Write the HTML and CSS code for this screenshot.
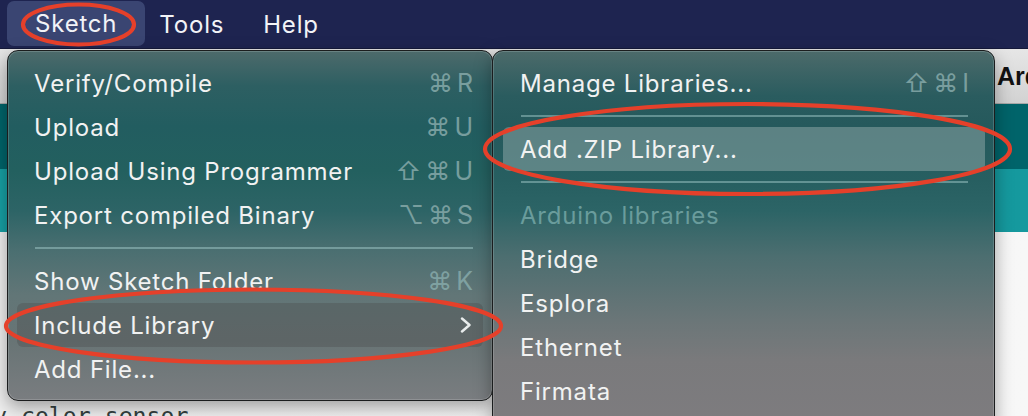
FILE: index.html
```html
<!DOCTYPE html>
<html>
<head>
<meta charset="utf-8">
<link rel="stylesheet" href="styles.css">
</head>
<body>
<div class="screen">
  <div class="menubar">
    <span class="mb-item active">Sketch</span>
    <span class="mb-item tools">Tools</span>
    <span class="mb-item help">Help</span>
  </div>
  <div class="app">
    <div class="toolbar"><span class="title">Arduino</span></div>
    <div class="tabs-dark"></div>
    <div class="tabs-teal"></div>
    <div class="editor"><span class="code">y color sensor</span></div>
  </div>

  <div class="menu menu-left">
    <div class="item"><span class="label">Verify/Compile</span><span class="key">⌘R</span></div>
    <div class="item"><span class="label">Upload</span><span class="key">⌘U</span></div>
    <div class="item"><span class="label">Upload Using Programmer</span><span class="key">⇧⌘U</span></div>
    <div class="item"><span class="label">Export compiled Binary</span><span class="key">⌥⌘S</span></div>
    <div class="sep"></div>
    <div class="item"><span class="label">Show Sketch Folder</span><span class="key">⌘K</span></div>
    <div class="item hl-dark"><span class="label">Include Library</span>
      <svg class="chev" width="12" height="16" viewBox="0 0 12 16"><polyline points="2,1.5 9.5,8 2,14.5" fill="none" stroke="#e8ecec" stroke-width="2.4" stroke-linecap="round" stroke-linejoin="round"/></svg>
    </div>
    <div class="item"><span class="label">Add File...</span></div>
  </div>

  <div class="menu menu-right">
    <div class="item"><span class="label">Manage Libraries...</span><span class="key">⇧⌘I</span></div>
    <div class="sep"></div>
    <div class="item hl-light"><span class="label">Add .ZIP Library...</span></div>
    <div class="sep"></div>
    <div class="item disabled"><span class="label">Arduino libraries</span></div>
    <div class="item"><span class="label">Bridge</span></div>
    <div class="item"><span class="label">Esplora</span></div>
    <div class="item"><span class="label">Ethernet</span></div>
    <div class="item"><span class="label">Firmata</span></div>
  </div>

  <svg class="marks" width="1028" height="416" viewBox="0 0 1028 416">
    <ellipse cx="78.5" cy="24.5" rx="55.5" ry="20" fill="none" stroke="#e5402a" stroke-width="4.2"/>
    <ellipse cx="747.5" cy="149" rx="262.5" ry="45" fill="none" stroke="#e5402a" stroke-width="4.2"/>
    <ellipse cx="253.5" cy="326" rx="247.5" ry="36.5" fill="none" stroke="#e5402a" stroke-width="4.2"/>
  </svg>
</div>
</body>
</html>
```

FILE: styles.css
```css
html, body {
  margin: 0;
  padding: 0;
  width: 1028px;
  height: 416px;
  overflow: hidden;
  background: #f3f3f3;
}

.screen {
  position: relative;
  width: 1028px;
  height: 416px;
  overflow: hidden;
  font-family: Inter, "Noto Sans", "Liberation Sans", sans-serif;
}

.menubar {
  height: 48px;
  background: #1e2450;
  border-bottom: 1px solid #15193a;
  display: flex;
  align-items: center;
  color: #f2f3f7;
  font-size: 24px;
  letter-spacing: 0.8px;
}

.mb-item.active {
  margin-left: 7px;
  height: 45px;
  padding: 0 28px;
  display: flex;
  align-items: center;
  background: #3a4572;
  border-radius: 7px;
  align-self: flex-start;
  margin-top: 1px;
}

.mb-item.tools { margin-left: 14px; }
.mb-item.help { margin-left: 39px; }

.app {
  display: flex;
  flex-direction: column;
  height: 367px;
}

.toolbar {
  height: 55px;
  background: linear-gradient(#e6e6e6, #d2d2d2);
  border-bottom: 1px solid #a8a8a8;
  display: flex;
  align-items: center;
  padding-left: 997px;
  box-sizing: border-box;
}

.title {
  font-family: "Liberation Sans", Arial, sans-serif;
  font-weight: bold;
  font-size: 25px;
  color: #111;
  white-space: nowrap;
}

.tabs-dark {
  height: 65px;
  background: #00646a;
}

.tabs-teal {
  height: 63px;
  background: linear-gradient(90deg, #17a0a4, #15999e);
}

.editor {
  flex: 1;
  background: linear-gradient(90deg, #efefef, #f7f7f7);
  display: flex;
  align-items: flex-end;
}

.code {
  font-family: "DejaVu Sans Mono", "Liberation Mono", monospace;
  font-size: 23.2px;
  color: #34403f;
  margin-left: -7px;
  margin-bottom: -13px;
  white-space: pre;
}

.menu {
  position: absolute;
  top: 50px;
  box-sizing: border-box;
  border: 1px solid #1b1d1e;
  border-radius: 11px;
  box-shadow: inset 0 0 0 1px rgba(255,255,255,0.16), 0 6px 18px rgba(0,0,0,0.35);
  color: #f1f2f2;
  font-size: 24px;
  letter-spacing: 0.8px;
  padding-top: 10px;
}

.menu-left {
  left: 7px;
  width: 486px;
  height: 351px;
  background: linear-gradient(#4d6a6b 0px, #2d5f62 35px, #225d60 75px, #23605f 120px, #2d6466 160px, #4b6f71 200px, #627677 245px, #687475 290px, #7a7d80 350px);
}

.menu-right {
  left: 492px;
  width: 503px;
  height: 380px;
  background: linear-gradient(#4c6a6a 0px, #2a5c5f 45px, #25595c 75px, #275f61 130px, #2c6466 160px, #4c6e70 205px, #6b7678 270px, #7a7a7c 310px, #7e7c7f 380px);
}

.item {
  height: 44px;
  margin: 0 9px;
  padding: 0 10px 0 17px;
  display: flex;
  align-items: center;
  justify-content: space-between;
  border-radius: 6px;
  white-space: nowrap;
}

.menu-right .item {
  margin: 0 9px 0 10px;
  padding: 0 16px 0 17px;
}

.key {
  color: #86a9a9;
  opacity: 0.85;
  font-size: 25px;
  letter-spacing: 4px;
  margin-right: -4px;
}

.hl-dark {
  background: rgba(70, 70, 72, 0.32);
}

.hl-light {
  background: rgba(160, 180, 180, 0.45);
}

.disabled .label {
  color: #6a9c9c;
}

.chev {
  margin-right: 1px;
}

.sep {
  height: 22px;
  display: flex;
  align-items: center;
  margin: 0 19px 0 27px;
}

.sep::before {
  content: "";
  display: block;
  width: 100%;
  height: 2px;
  background: rgba(160, 200, 200, 0.5);
}

.menu-right .sep {
  margin: 0 26px 0 28px;
}

.marks {
  position: absolute;
  left: 0;
  top: 0;
  pointer-events: none;
}
```
